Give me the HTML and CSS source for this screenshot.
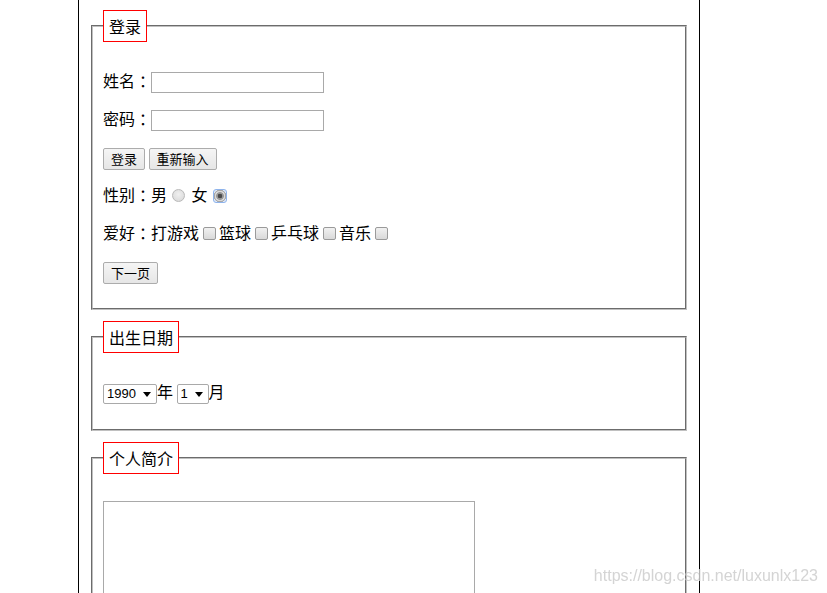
FILE: index.html
```
<!DOCTYPE html>
<html lang="zh-CN">
<head>
<meta charset="utf-8">
<title>表单</title>
<link rel="stylesheet" href="styles.css">
</head>
<body>
<div class="page">
  <form class="form">
    <fieldset class="group">
      <legend class="title">登录</legend>
      <p class="row">姓名<span class="colon">：</span><input class="text" type="text"></p>
      <p class="row">密码<span class="colon">：</span><input class="text" type="password"></p>
      <p class="row"><button class="btn" type="button">登录</button> <button class="btn" type="button">重新输入</button></p>
      <p class="row">性别<span class="colon">：</span>男<input class="radio" type="radio" name="sex"> 女<input class="radio checked" type="radio" name="sex" checked></p>
      <p class="row">爱好<span class="colon">：</span>打游戏<input class="check" type="checkbox">篮球<input class="check" type="checkbox">乒乓球<input class="check" type="checkbox">音乐<input class="check" type="checkbox"></p>
      <p class="row"><button class="btn" type="button">下一页</button></p>
    </fieldset>
    <fieldset class="group">
      <legend class="title">出生日期</legend>
      <p class="row"><span class="sel sel-year"><select class="select"><option>1990</option></select></span>年 <span class="sel sel-month"><select class="select"><option>1</option></select></span>月</p>
    </fieldset>
    <fieldset class="group">
      <legend class="title">个人简介</legend>
      <p class="row row-area"><textarea class="area"></textarea></p>
    </fieldset>
  </form>
</div>
<div class="watermark">https://blog.csdn.net/luxunlx123</div>
</body>
</html>
```
FILE: styles.css
```
html, body {
  margin: 0;
  padding: 0;
  background: #fff;
  overflow: hidden;
}
body {
  font-family: "Noto Sans CJK SC", "Microsoft YaHei", sans-serif;
  font-size: 16px;
  line-height: 22px;
  color: #000;
}
.page {
  margin-left: 78px;
  width: 600px;
  min-height: 700px;
  border-left: 1px solid #000;
  border-right: 1px solid #000;
  padding: 10px 10px 0;
  box-sizing: content-box;
}
.form {
  margin: 0;
}
.group {
  margin: 0 2px 11px;
  padding: 11px 10px 11px;
  border: 2px groove #c0c0c0;
  min-width: 0;
}
.title {
  padding: 5px 5px;
  border: 1px solid #f00;
  line-height: 20px;
  font-size: 16px;
}
.row {
  margin: 16px 0;
  height: 22px;
  white-space: nowrap;
}
.row-area {
  height: auto;
}
.colon {
  display: inline-block;
  width: 16px;
  text-align: center;
  font-feature-settings: "halt";
}
.text {
  box-sizing: border-box;
  width: 173px;
  height: 21px;
  margin: 0;
  padding: 1px 2px;
  border: 1px solid #a9a9a9;
  vertical-align: middle;
  font-size: 13px;
}
.btn {
  box-sizing: border-box;
  height: 22px;
  margin: 0;
  padding: 0 7px;
  border: 1px solid #acacac;
  border-radius: 2px;
  background: linear-gradient(#f5f5f5, #e6e6e6);
  font-family: "Noto Sans CJK SC", sans-serif;
  font-size: 13px;
  line-height: 18px;
  color: #000;
  vertical-align: middle;
}
.radio {
  -webkit-appearance: none;
  appearance: none;
  box-sizing: border-box;
  width: 13px;
  height: 13px;
  margin: 0 3px 0 5px;
  border: 1px solid #b9b9b9;
  border-radius: 50%;
  background: radial-gradient(circle at 50% 40%, #f0f0f0 0, #d6d6d6 100%);
  vertical-align: middle;
  position: relative;
  top: -1px;
}
.radio.checked {
  width: 14px;
  height: 14px;
  border: 1px solid #8fb4ec;
  border-radius: 3px;
  background:
    radial-gradient(circle, #4a4a4a 0 2px, #9a9a9a 2.6px 3.6px, #d9d9d9 4.2px 5px, #a7a7a7 5.4px 6px, #dfe9fa 6.5px);
}
.check {
  -webkit-appearance: none;
  appearance: none;
  box-sizing: border-box;
  width: 13px;
  height: 13px;
  margin: 0 3px 0 4px;
  border: 1px solid #9a9a9a;
  border-radius: 2px;
  background: linear-gradient(#f1f1f1, #d9d9d9);
  vertical-align: middle;
  position: relative;
  top: -1px;
}
.sel {
  position: relative;
  display: inline-block;
  vertical-align: middle;
  line-height: 0;
}
.select {
  -webkit-appearance: none;
  appearance: none;
  box-sizing: border-box;
  height: 20px;
  margin: 0;
  padding: 0 0 0 3px;
  border: 1px solid #a9a9a9;
  border-radius: 2px;
  background: #fff;
  font-family: "Liberation Sans", Arial, sans-serif;
  font-size: 13px;
  color: #000;
}
.sel-year .select { width: 54px; }
.sel-month .select { width: 32px; }
.sel::after {
  content: "";
  position: absolute;
  right: 6px;
  top: 8px;
  border-left: 4px solid transparent;
  border-right: 4px solid transparent;
  border-top: 5px solid #000;
  pointer-events: none;
}
.area {
  box-sizing: border-box;
  width: 372px;
  height: 200px;
  margin: 0;
  border: 1px solid #a9a9a9;
  resize: none;
  vertical-align: top;
}
.watermark {
  position: fixed;
  right: 9px;
  bottom: 7px;
  font-family: "Liberation Sans", Arial, sans-serif;
  font-size: 16px;
  line-height: 20px;
  color: rgba(205, 205, 205, 0.85);
}
```
